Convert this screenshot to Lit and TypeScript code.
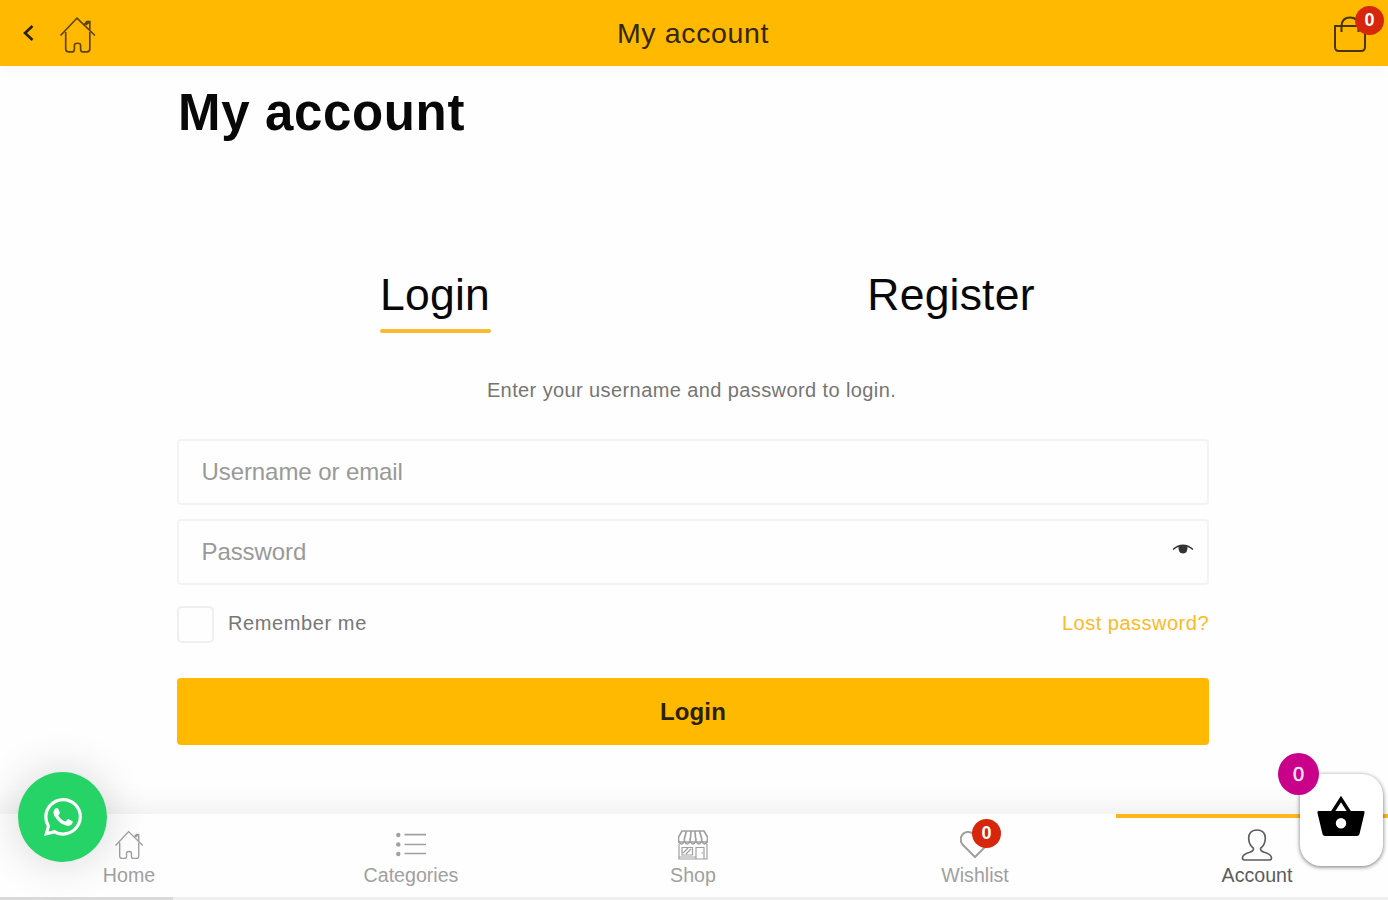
import { LitElement, html, css, svg } from "lit";
import { customElement } from "lit/decorators.js";

const housePath = svg`
  <path d="M1.500 19 L17.500 2 L35 19" />
  <path d="M24.500 8.500 L27 5.500 H30 V13.500 M26 8.500 L29 6.500" />
  <path d="M6.500 15.500 V32 Q6.500 35 9.500 35 H13 Q15 35 15 32 V28.500 Q15 26.500 18 26.500 Q21 26.500 21 28.500 V32 Q21 35 23 35 H27 Q30 35 30 32 V15.500" />`;

const navIcons = {
  home: html`<svg class="icon" viewBox="0 0 36 37">${housePath}</svg>`,
  categories: html`<svg class="icon" viewBox="0 0 30 30">
    <g fill="currentColor" stroke="none">
      <circle cx="2.300" cy="5" r="2.200" /><circle cx="2.300" cy="14.500" r="2.200" /><circle cx="2.300" cy="24" r="2.200" />
    </g>
    <path d="M8.500 4.700 H30 M8.500 14.500 H30 M8.500 23.500 H30" />
  </svg>`,
  shop: html`<svg class="icon" viewBox="0 0 30 30">
    <path d="M4 1 H26 L29.500 7 V12 H.500 V7 Z M8.500 1 L6.500 8 M13 1 L12.500 8 M17 1 L17.500 8 M21.500 1 L23.500 8" />
    <path d="M.500 11 Q3.500 17 6.400 11 Q9.200 17 12.100 11 Q15 17 17.900 11 Q20.800 17 23.700 11 Q26.500 17 29.500 11 M6.400 8 V12 M12.100 8 V12 M17.900 8 V12 M23.700 8 V12" />
    <path d="M1 14 V29 H29 V14 M18 29 V17.500 H26 V29 M4 17.500 H14.500 V25 H4 Z M5 23 L10 18 M8 24 L13 19 M1 27 H18 M23.500 23 H25" stroke-width="1.200" />
  </svg>`,
  wishlist: html`<svg class="icon bold" viewBox="0 0 30 30">
    <path d="M15 27 L2.500 14.500 C-1 10 1 3 7 2 C11 1.500 13.500 3.500 15 6 C16.500 3.500 19 1.500 23 2 C29 3 31 10 27.500 14.500 Z" />
  </svg>`,
  account: html`<svg class="icon" viewBox="0 0 32 33">
    <path d="M16 1 C10 1 7 5 7.500 10.500 C7.800 15 9.500 17.500 12 19.500 C13 21.500 11.500 23 8.500 24 C3.500 25.500 1 27.500 1 30 Q1 32 3 32 H29 Q31 32 31 30 C31 27.500 28.500 25.500 23.500 24 C20.500 23 19 21.500 20 19.500 C22.500 17.500 24.200 15 24.500 10.500 C25 5 22 1 16 1 Z" />
  </svg>`,
};

const navItems = [
  { label: "Home", icon: navIcons.home },
  { label: "Categories", icon: navIcons.categories },
  { label: "Shop", icon: navIcons.shop },
  { label: "Wishlist", icon: navIcons.wishlist, badge: 0 },
  { label: "Account", icon: navIcons.account, active: true },
];

@customElement("app-root")
export class AppRoot extends LitElement {
  static styles = css`
    :host {
      display: flex;
      flex-direction: column;
      position: relative;
      height: 900px;
      overflow: hidden;
      background: #fefefe;
      font-family: "Liberation Sans", Arial, sans-serif;
      color: #080808;
    }
    * { box-sizing: border-box; }
    svg { display: block; fill: none; stroke: currentColor; }
    .topbar {
      flex: none;
      height: 66px;
      background: #ffb900;
      display: grid;
      grid-template-columns: 1fr auto 1fr;
      align-items: center;
      padding: 0 21px 0 22px;
      box-shadow: 0 2px 14px rgba(0, 0, 30, 0.04);
      color: #2b2100;
    }
    .left { display: flex; align-items: center; gap: 24px; }
    .back { width: 13px; height: 20px; stroke-width: 2.6; }
    .house { width: 37px; height: 38px; margin-top: 3px; stroke-width: 1.6; color: #5a4200; }
    .title { font-size: 28.5px; line-height: 32px; letter-spacing: 0.65px; color: #33270a; margin-right: 3px; }
    .bag { position: relative; justify-self: end; color: #4a3500; }
    .bag svg { width: 34px; height: 38px; stroke-width: 2; margin-top: 2px; }
    .badge {
      position: absolute;
      width: 29px;
      height: 29px;
      border-radius: 50%;
      background: #d6260c;
      color: #fff;
      font-size: 18px;
      font-weight: 700;
      line-height: 29px;
      text-align: center;
    }
    .bag .badge { left: 22px; top: -7px; }
    .content { flex: 1; width: 1032px; margin-left: 177px; }
    h1 {
      margin: 16px 0 0 1px;
      font-size: 51px;
      line-height: 62px;
      letter-spacing: 0.65px;
    }
    .tabs { display: grid; grid-template-columns: 1fr 1fr; justify-items: center; margin-top: 124px; }
    .tab {
      font-size: 44.5px;
      line-height: 54px;
      height: 66px;
      letter-spacing: 0.2px;
      position: relative;
    }
    .tab.active::after {
      content: "";
      position: absolute;
      left: 0;
      right: -1px;
      bottom: 1px;
      height: 4px;
      border-radius: 2px;
      background: #fdba2c;
    }
    .hint { margin: 43px 1px 0 0; padding-right: 2px; text-align: center; font-size: 20px; line-height: 26px; letter-spacing: 0.4px; color: #757575; }
    .field {
      height: 66px;
      border: 2px solid #f3f3f3;
      border-radius: 4px;
      display: flex;
      align-items: center;
      justify-content: space-between;
      padding: 0 13px 0 22.5px;
      font-size: 24px;
      letter-spacing: -0.08px;
      color: #999;
    }
    .user { margin-top: 36px; }
    .pass { margin-top: 14px; }
    .eye { width: 22px; height: 12px; color: #333; margin-bottom: 6px; }
    .options { display: flex; align-items: center; margin-top: 21px; font-size: 20px; color: #777; letter-spacing: 0.6px; }
    .check { width: 37px; height: 37px; border: 2px solid #efefef; border-radius: 5px; margin-right: 14px; }
    .options span { margin-bottom: 3px; }
    .options .lost { margin-left: auto; color: #fbba28; letter-spacing: 0.5px; }
    .submit {
      display: block;
      width: 100%;
      height: 67px;
      margin-top: 35px;
      border: 0;
      border-radius: 4px;
      background: #ffb900;
      color: #2b2100;
      font: 700 24px/66px "Liberation Sans", Arial, sans-serif;
      letter-spacing: 0.1px;
      padding: 0;
    }
    .nav {
      flex: none;
      display: grid;
      grid-template-columns: repeat(5, 282px);
      height: 86px;
      margin-left: -12px;
      width: 1410px;
      background: #fefefe;
      box-shadow: 0 0 36px rgba(0, 0, 0, 0.09);
      border-bottom: 3px solid #efefef;
      color: #a0a0a0;
    }
    .item {
      display: flex;
      flex-direction: column;
      align-items: center;
      border-top: 4px solid transparent;
      padding-top: 12px;
      font-size: 19.6px;
      line-height: 22px;
    }
    .item.active { border-color: #fbb81c; color: #5c5c5c; }
    .glyph { position: relative; margin-bottom: 4px; }
    .glyph .badge { left: 12px; top: -11px; }
    .icon { width: 30px; height: 30px; stroke-width: 1.7; }
    .item.active .icon { width: 32px; height: 32px; margin: -1px 0; }
    .icon.bold { stroke-width: 2; }
    .scroll { position: absolute; left: 0; bottom: 0; width: 173px; height: 3px; background: #dadada; }
    .whatsapp {
      position: absolute;
      left: 18px;
      top: 772px;
      width: 89px;
      height: 90px;
      border-radius: 50%;
      background: #25d366;
      display: grid;
      place-items: center;
      color: #fff;
      box-shadow: 0 0 45px rgba(0, 0, 0, 0.16);
    }
    .whatsapp svg { width: 38px; height: 38px; fill: currentColor; stroke: none; }
    .cart {
      position: absolute;
      left: 1300px;
      top: 774px;
      width: 83px;
      height: 92px;
      border-radius: 21px;
      background: #fff;
      box-shadow: 0 1px 4px rgba(0, 0, 0, 0.55);
      color: #000;
    }
    .cart svg { width: 48px; height: 42px; margin: 21px 0 0 17px; }
    .cart .badge { left: -22px; top: -21px; width: 41px; height: 42px; line-height: 42px; background: #c90089; font-size: 20px; font-weight: 400; color: #ffe8fb; -webkit-text-stroke: 0.4px; }
  `;

  render() {
    return html`
      <header class="topbar">
        <div class="left">
          <svg class="back" viewBox="0 0 13 20"><path d="M10.500 3 L3 10 L10.500 17" /></svg>
          <svg class="house" viewBox="0 0 36 37">${housePath}</svg>
        </div>
        <div class="title">My account</div>
        <div class="bag">
          <svg viewBox="0 0 34 38">
            <path d="M2 11 H32 V32 Q32 36 28 36 H6 Q2 36 2 32 Z M8.500 17 V11 Q9 2.500 17 2.500 Q25 2.500 25.500 11 V17" />
          </svg>
          <span class="badge">0</span>
        </div>
      </header>
      <main class="content">
        <h1>My account</h1>
        <div class="tabs">
          <div class="tab active">Login</div>
          <div class="tab">Register</div>
        </div>
        <p class="hint">Enter your username and password to login.</p>
        <div class="field user">Username or email</div>
        <div class="field pass">
          Password
          <svg class="eye" viewBox="0 0 22 12">
            <path d="M1 6.500 Q11 -2 21 6.500" stroke-width="1.600" />
            <path d="M6.500 3 H15.500 Q16 10.500 11 10.500 Q6 10.500 6.500 3 Z" fill="currentColor" stroke="none" />
          </svg>
        </div>
        <div class="options">
          <div class="check"></div>
          <span>Remember me</span>
          <span class="lost">Lost password?</span>
        </div>
        <button class="submit">Login</button>
      </main>
      <nav class="nav">
        ${navItems.map(
          (item) => html`<div class="item ${item.active ? "active" : ""}">
            <div class="glyph">
              ${item.icon}
              ${item.badge !== undefined ? html`<span class="badge">${item.badge}</span>` : ""}
            </div>
            ${item.label}
          </div>`
        )}
      </nav>
      <div class="scroll"></div>
      <div class="whatsapp">
        <svg viewBox="0 0 24 24">
          <path d="M17.472 14.382c-.297-.149-1.758-.867-2.030-.967-.273-.099-.471-.148-.670.150-.197.297-.767.966-.940 1.164-.173.199-.347.223-.644.075-.297-.150-1.255-.463-2.390-1.475-.883-.788-1.480-1.761-1.653-2.059-.173-.297-.018-.458.130-.606.134-.133.298-.347.446-.520.149-.174.198-.298.298-.497.099-.198.050-.371-.025-.520-.075-.149-.669-1.612-.916-2.207-.242-.579-.487-.500-.669-.510-.173-.008-.371-.010-.570-.010-.198 0-.520.074-.792.372-.272.297-1.040 1.016-1.040 2.479 0 1.462 1.065 2.875 1.213 3.074.149.198 2.096 3.200 5.077 4.487.709.306 1.262.489 1.694.625.712.227 1.360.195 1.871.118.571-.085 1.758-.719 2.006-1.413.248-.694.248-1.289.173-1.413-.074-.124-.272-.198-.570-.347m-5.421 7.403h-.004a9.870 9.870 0 01-5.031-1.378l-.361-.214-3.741.982.998-3.648-.235-.374a9.860 9.860 0 01-1.510-5.260c.001-5.450 4.436-9.884 9.888-9.884 2.640 0 5.122 1.030 6.988 2.898a9.825 9.825 0 012.893 6.994c-.003 5.450-4.437 9.884-9.885 9.884m8.413-18.297A11.815 11.815 0 0012.050 0C5.495 0 .160 5.335.157 11.892c0 2.096.547 4.142 1.588 5.945L.057 24l6.305-1.654a11.882 11.882 0 005.683 1.448h.005c6.554 0 11.890-5.335 11.893-11.893a11.821 11.821 0 00-3.480-8.413z" />
        </svg>
      </div>
      <div class="cart">
        <svg viewBox="0 0 48 42">
          <path d="M15 18 L24 4 L33 18" stroke-width="3.500" />
          <path fill="currentColor" stroke="none" fill-rule="evenodd" d="M1.500 16 H46.500 Q48 16 47.500 18 L42.500 39 Q41.900 41 40 41 H8 Q6.100 41 5.500 39 L.500 18 Q0 16 1.500 16 Z M24 23 A5.200 5.200 0 1 0 24 33.400 A5.200 5.200 0 1 0 24 23 Z" />
        </svg>
        <span class="badge">0</span>
      </div>
    `;
  }
}
